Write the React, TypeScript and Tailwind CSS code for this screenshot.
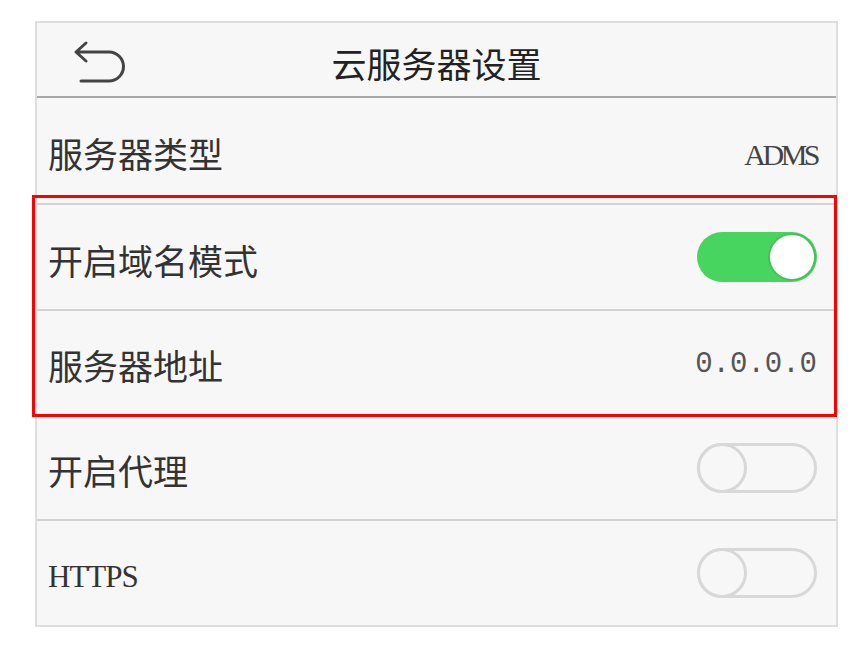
import React from 'react';

const cjk = '"Noto Sans CJK SC", "Noto Sans", sans-serif';

function Toggle({ on }: { on: boolean }) {
  if (on) {
    return (
      <div className="flex h-[50px] w-[120px] items-center justify-end rounded-full bg-[#47d45f] pr-[1px]">
        <div className="h-[48px] w-[48px] rounded-full border-2 border-[#47c25a] bg-white" />
      </div>
    );
  }
  return (
    <div className="flex h-[50px] w-[120px] items-center rounded-full border-[3px] border-[#d8d8d8] bg-[#f7f7f7]">
      <div className="-ml-[3px] h-[50px] w-[50px] rounded-full border-[3px] border-[#d8d8d8] bg-[#f7f7f7]" />
    </div>
  );
}

function Row({
  label,
  latin,
  h,
  last,
  children,
}: {
  label: string;
  latin?: boolean;
  h: string;
  last?: boolean;
  children: React.ReactNode;
}) {
  return (
    <div
      className={`flex items-center justify-between pl-[11px] pr-[19px] ${h} ${
        last ? '' : 'border-b-2 border-[#d3d3d3]'
      }`}
    >
      {latin ? (
        <span
          className="mt-[8px] text-[31px] text-[#333] tracking-[-1px]"
          style={{ fontFamily: '"Liberation Serif", serif' }}
        >
          {label}
        </span>
      ) : (
        <span className="mt-[4px] text-[35px] leading-none text-[#333]" style={{ fontFamily: cjk }}>
          {label}
        </span>
      )}
      {children}
    </div>
  );
}

export default function App() {
  return (
    <div className="relative min-h-[647px] w-[860px] bg-white pl-[35px] pt-[21px]">
      <div className="w-[803px] border-2 border-[#dedede] bg-[#f7f7f7]">
        {/* cabecera */}
        <div className="grid h-[75px] grid-cols-[1fr_auto_1fr] items-center border-b-2 border-[#a8a8a8]">
          <div className="pl-[36px] pt-[4px]">
            <svg width="54" height="46" viewBox="0 0 54 46" fill="none">
              <path
                d="M13 4 L3 13 L13 22 M3 13 H36 A14.5 14.5 0 0 1 36 42 H8"
                stroke="#444"
                strokeWidth="3"
                strokeLinecap="round"
                strokeLinejoin="round"
              />
            </svg>
          </div>
          <div className="mt-[6px] text-[35px] leading-none text-[#222]" style={{ fontFamily: cjk }}>
            云服务器设置
          </div>
          <div />
        </div>

        <Row label="服务器类型" h="h-[107px]">
          <span
            className="mt-[8px] text-[30px] tracking-[-3.5px] text-[#444]"
            style={{ fontFamily: '"Liberation Serif", serif' }}
          >
            ADMS
          </span>
        </Row>
        <Row label="开启域名模式" h="h-[106px]">
          <Toggle on />
        </Row>
        <Row label="服务器地址" h="h-[105px]">
          <span
            className="mt-[4px] text-[29px] text-[#555]"
            style={{ fontFamily: '"Liberation Mono", monospace' }}
          >
            0.0.0.0
          </span>
        </Row>
        <Row label="开启代理" h="h-[105px]">
          <Toggle on={false} />
        </Row>
        <Row label="HTTPS" latin h="h-[104px]" last>
          <Toggle on={false} />
        </Row>
      </div>

      {/* marco rojo de anotación */}
      <div className="pointer-events-none absolute left-[32px] top-[195px] h-[222px] w-[805px] border-[3px] border-[#ff0000]" />
    </div>
  );
}
